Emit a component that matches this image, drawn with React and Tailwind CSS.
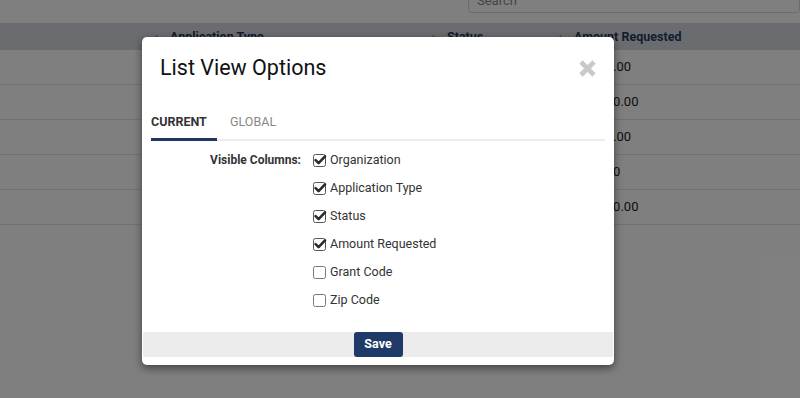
import { useState } from 'react'

const columns = ['Organization', 'Application Type', 'Status', 'Amount Requested', 'Grant Code', 'Zip Code']

const rows = [
    { type: 'General Operating', status: 'Submitted', amount: '$5,000.00' },
    { type: 'Project Support', status: 'In Review', amount: '$10,000.00' },
    { type: 'Capital', status: 'Approved', amount: '$7,500.00' },
    { type: 'General Operating', status: 'Declined', amount: '$10,000' },
    { type: 'Project Support', status: 'Submitted', amount: '$25,000.00' },
]

function SortIcon() {
    return (
        <svg className="w-[7px] h-[5px]" viewBox="0 0 7 5">
            <path d="M0 5L3.5 0L7 5Z" fill="#8a8fa0" />
        </svg>
    )
}

function CheckBox({ checked, onClick }) {
    return (
        <button type="button" onClick={onClick} className="w-[14px] h-[14px] shrink-0">
            <svg className="w-[14px] h-[14px]" viewBox="0 0 14 14">
                <rect x="0.5" y="1.5" width="12" height="12" rx="2" fill="#fff" stroke={checked ? '#555' : '#777'} strokeWidth="1" />
                {checked && (
                    <path d="M2.6 7.2L5.6 10.2L12 3.4" fill="none" stroke="#2b2b2b" strokeWidth="2.6" strokeLinecap="round" strokeLinejoin="round" />
                )}
            </svg>
        </button>
    )
}

export default function App() {
    const [tab, setTab] = useState('current')
    const [visible, setVisible] = useState({
        'Organization': true,
        'Application Type': true,
        'Status': true,
        'Amount Requested': true,
        'Grant Code': false,
        'Zip Code': false,
    })

    const toggle = (name) => setVisible({ ...visible, [name]: !visible[name] })

    return (
        <div className="relative w-[800px] h-[398px] overflow-hidden bg-white font-['Roboto',sans-serif] text-[12.5px] text-[#1a1a1a]">
            {/* page behind the dialog */}
            <div className="h-[23px] flex justify-end">
                <div className="w-[332px] h-[25px] -mt-[12px] border border-[#d8d8d8] rounded-[3px] flex items-end pl-[8px] pb-[2px] text-[#888] text-[13px]">
                    Search
                </div>
            </div>
            <div className="h-[27px] flex items-center pt-[1px] bg-[#d7d9e0] font-bold text-[#283a5c]">
                <div className="w-[150px]" />
                <div className="w-[277px] flex items-center pl-[3px] gap-[10px]"><SortIcon />Application Type</div>
                <div className="w-[127px] flex items-center pl-[3px] gap-[10px]"><SortIcon />Status</div>
                <div className="flex-1 flex items-center pl-[3px] gap-[10px]"><SortIcon />Amount Requested</div>
            </div>
            {rows.map((r, i) => (
                <div key={i} className="h-[35px] flex items-center border-b border-[#e2e2e2] text-[13px]">
                    <div className="w-[150px]" />
                    <div className="w-[277px] pl-[20px]">{r.type}</div>
                    <div className="w-[127px] pl-[20px]">{r.status}</div>
                    <div className="flex-1 pl-[20px]">{r.amount}</div>
                </div>
            ))}

            {/* backdrop */}
            <div className="absolute inset-0 bg-black/50" />

            {/* dialog */}
            <div className="absolute left-[142px] top-[37px] w-[472px] bg-white rounded-[5px] shadow-[0_3px_9px_rgba(0,0,0,0.5)] flex flex-col">
                <div className="flex items-start justify-between pl-[18px] pr-[17px] pt-[18px]">
                    <h2 className="text-[21.5px] leading-[26px] text-[#111]">List View Options</h2>
                    <button type="button" className="mt-[4px]">
                        <svg className="w-[19px] h-[19px]" viewBox="0 0 19 19">
                            <path d="M3 3L16 16M16 3L3 16" stroke="#c9c9c9" strokeWidth="4.6" strokeLinecap="butt" />
                        </svg>
                    </button>
                </div>

                <div className="mx-[9px] mt-[24px] flex border-b-2 border-[#ececec]">
                    <button
                        type="button"
                        onClick={() => setTab('current')}
                        className={`w-[66px] text-left pt-[9px] pb-[8px] leading-[16px] text-[12.5px] -mb-[2px] border-b-[3px] ${tab === 'current' ? 'font-bold text-[#333] border-[#1f3564]' : 'text-[#888] border-transparent'}`}
                    >
                        CURRENT
                    </button>
                    <button
                        type="button"
                        onClick={() => setTab('global')}
                        className={`ml-[13px] text-left pt-[9px] pb-[8px] leading-[16px] text-[12.5px] -mb-[2px] border-b-[3px] ${tab === 'global' ? 'font-bold text-[#333] border-[#1f3564]' : 'text-[#888] border-transparent'}`}
                    >
                        GLOBAL
                    </button>
                </div>

                <div className="flex pt-[5px] pb-[18px]">
                    <div className="w-[171px] pr-[12px] h-[28px] flex items-center justify-end font-bold text-[#333] text-[12px]">
                        Visible Columns:
                    </div>
                    <div className="flex flex-col">
                        {columns.map((c) => (
                            <label key={c} className="h-[28px] flex items-center gap-[3px] text-[#333] text-[12.5px] cursor-pointer">
                                <CheckBox checked={visible[c]} onClick={() => toggle(c)} />
                                <span>{c}</span>
                            </label>
                        ))}
                    </div>
                </div>

                <div className="h-[25px] mx-[1px] bg-[#ececec] flex justify-center">
                    <button type="button" className="w-[49px] h-[25px] bg-[#1f3a68] rounded-[3px] text-white font-bold text-[12.5px]">
                        Save
                    </button>
                </div>
                <div className="h-[8px]" />
            </div>
        </div>
    )
}
